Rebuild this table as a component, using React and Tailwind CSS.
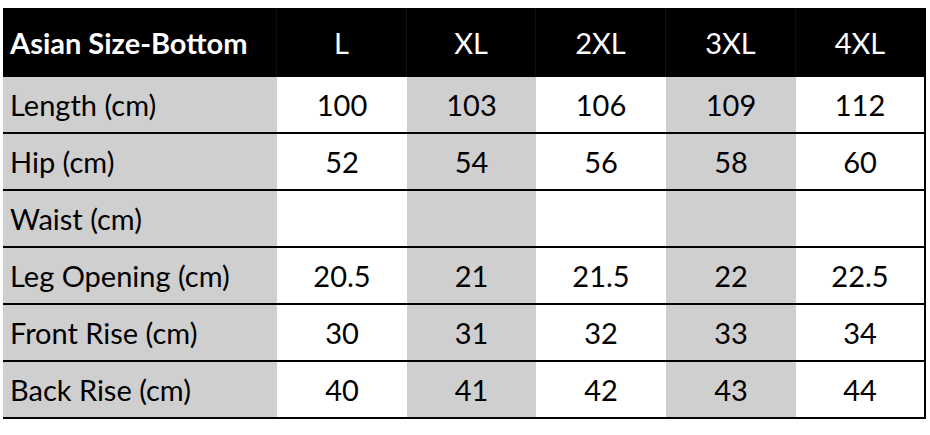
import React from 'react';

const sizes = ['L', 'XL', '2XL', '3XL', '4XL'];

const rows = [
  { label: 'Length (cm)', values: ['100', '103', '106', '109', '112'] },
  { label: 'Hip (cm)', values: ['52', '54', '56', '58', '60'] },
  { label: 'Waist (cm)', values: ['', '', '', '', ''] },
  { label: 'Leg Opening (cm)', values: ['20.5', '21', '21.5', '22', '22.5'] },
  { label: 'Front Rise (cm)', values: ['30', '31', '32', '33', '34'] },
  { label: 'Back Rise (cm)', values: ['40', '41', '42', '43', '44'] },
];

// grey on the label column and on XL / 3XL
const cellBg = ['bg-white', 'bg-[#d0cfd0]', 'bg-white', 'bg-[#d0cfd0]', 'bg-white'];

const cols = 'grid grid-cols-[274px_130px_129px_130px_130px_128px]';

export default function App() {
  return (
    <div className="w-[930px] h-[435px] bg-white pl-[3px] pt-[8px] font-['Lato',sans-serif] text-black">
      <div className="w-[923px] border-r-2 border-black">
        <div className={`${cols} h-[69px] bg-black text-white text-[29px]`}>
          <div className="flex items-center pl-[7px] font-bold border-r border-[#111]">
            Asian Size-Bottom
          </div>
          {sizes.map((s, i) => (
            <div
              key={s}
              className={`flex items-center justify-center ${i < 4 ? 'border-r border-[#111]' : ''}`}
            >
              {s}
            </div>
          ))}
        </div>

        {rows.map((row) => (
          <div key={row.label} className={`${cols} h-[57px] border-b-2 border-black text-[29px]`}>
            <div className="flex items-center pl-[7px] bg-[#d0cfd0]">{row.label}</div>
            {row.values.map((v, i) => (
              <div key={i} className={`flex items-center justify-center ${cellBg[i]}`}>
                {v}
              </div>
            ))}
          </div>
        ))}
      </div>
    </div>
  );
}
